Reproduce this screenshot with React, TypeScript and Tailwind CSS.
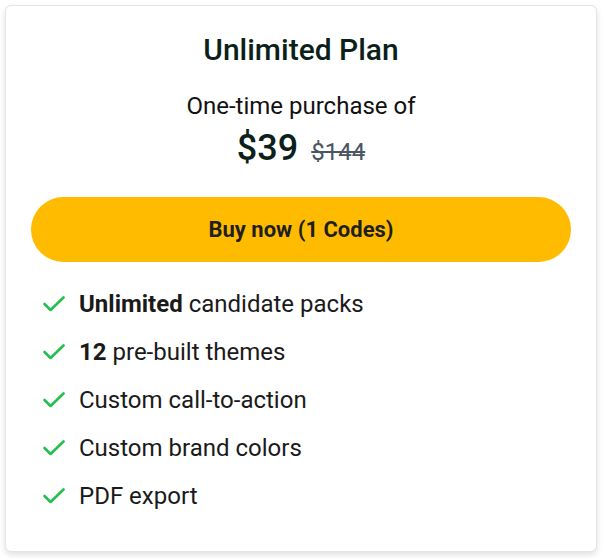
import React from 'react';

const features: { bold?: string; text: string }[] = [
  { bold: 'Unlimited', text: ' candidate packs' },
  { bold: '12', text: ' pre-built themes' },
  { text: 'Custom call-to-action' },
  { text: 'Custom brand colors' },
  { text: 'PDF export' },
];

function CheckMark() {
  return (
    <svg viewBox="0 0 22 16" className="w-[22px] h-[16px] shrink-0" fill="none">
      <polyline points="1.5,8 7.5,14 20.5,1.5" stroke="#22c04e" strokeWidth="2.6" strokeLinecap="round" strokeLinejoin="round" />
    </svg>
  );
}

export default function App() {
  return (
    <div className="min-h-screen bg-white p-[5px] font-['Roboto',sans-serif]">
      <div className="w-[592px] h-[547px] rounded-md border border-[#e4e4e4] bg-white shadow-[0_3px_6px_rgba(0,0,0,0.12)] px-[25px] pt-[26px]">
        <h2 className="text-center text-[30px] leading-[36px] font-medium text-[#0d1f1a]">Unlimited Plan</h2>

        <p className="mt-[23px] text-center text-[24px] leading-[30px] text-[#111]">One-time purchase of</p>
        <div className="flex items-baseline justify-center gap-[13px] mt-[5px] h-[44px]">
          <span className="text-[36px] leading-[44px] font-medium text-[#0d1f1a]">$39</span>
          <span className="text-[24px] text-[#4b5563] line-through">$144</span>
        </div>

        <button className="mt-[27px] w-full h-[65px] rounded-full bg-[#ffbb00] text-[22px] font-bold text-[#1f1f1f]">
          Buy now (1 Codes)
        </button>

        <ul className="mt-[18px] flex flex-col">
          {features.map((f, i) => (
            <li key={i} className="flex items-center h-[48px] pl-[12px]">
              <CheckMark />
              <span className="ml-[14px] text-[24px] text-[#1a1a1a]">
                {f.bold && <b className="font-bold">{f.bold}</b>}
                {f.text}
              </span>
            </li>
          ))}
        </ul>
      </div>
    </div>
  );
}
